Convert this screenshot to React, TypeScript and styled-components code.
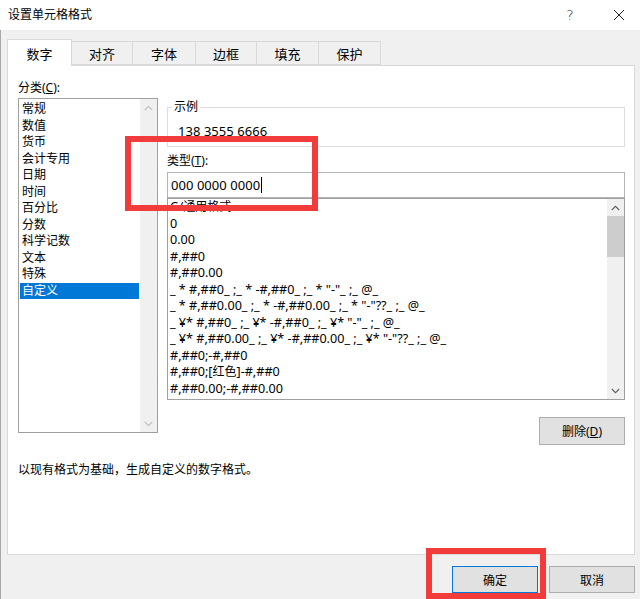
import React from 'react';
import styled, { createGlobalStyle } from 'styled-components';

const FONT = `"Noto Sans", "Noto Sans CJK SC", sans-serif`;

const Global = createGlobalStyle`
  html, body { margin: 0; padding: 0; background: #f0f0f0; }
  body {
    width: 640px; height: 599px; overflow: hidden;
    font-family: ${FONT}; font-size: 12px; color: #000;
    -webkit-font-smoothing: antialiased;
  }
  * { box-sizing: border-box; }
`;

const Window = styled.div`
  position: relative;
  width: 640px;
  height: 599px;
  display: flex;
  flex-direction: column;
  background: #f0f0f0;
  overflow: hidden;
`;

const TitleBar = styled.div`
  height: 30px;
  flex: none;
  background: #fff;
  display: flex;
  align-items: center;
  padding-left: 8px;
`;

const Title = styled.div`
  flex: 1;
  font-size: 12px;
  line-height: 16px;
`;

const CaptionButton = styled.div<{ $w: number }>`
  width: ${(p) => p.$w}px;
  height: 30px;
  display: flex;
  align-items: center;
  justify-content: center;
  color: #222;
  font-size: 14px;
  font-family: "DejaVu Sans", sans-serif;
  font-weight: 300;
`;

const Body = styled.div`
  flex: 1;
  display: flex;
  flex-direction: column;
  border-left: 1px solid #a8a8a8;
  padding: 9px 0 0 6px;
`;

const TabStrip = styled.div`
  display: flex;
  align-items: flex-end;
  height: 26px;
`;

const Tab = styled.div<{ $w: number; $active?: boolean }>`
  position: relative;
  width: ${(p) => p.$w}px;
  height: ${(p) => (p.$active ? 27 : 24)}px;
  margin-bottom: ${(p) => (p.$active ? -1 : 0)}px;
  margin-left: -1px;
  &:first-child { margin-left: 0; }
  z-index: ${(p) => (p.$active ? 2 : 1)};
  background: ${(p) => (p.$active ? '#fff' : '#f0f0f0')};
  border: 1px solid #d9d9d9;
  border-bottom: ${(p) => (p.$active ? 'none' : '1px solid #d9d9d9')};
  display: flex;
  align-items: center;
  justify-content: center;
  padding-top: ${(p) => (p.$active ? 0 : 1)}px;
  font-size: 13px;
`;

const Panel = styled.div`
  width: 628px;
  height: 490px;
  background: #fff;
  border: 1px solid #d9d9d9;
  padding: 13px 0 0 10px;
  display: flex;
  flex-direction: column;
`;

const TopRow = styled.div`
  display: flex;
  gap: 9px;
`;

const LeftCol = styled.div`
  width: 140px;
  display: flex;
  flex-direction: column;
`;

const Label = styled.div`
  line-height: 17px;
  height: 17px;
  margin-bottom: 2px;
`;

const Underline = styled.span`
  text-decoration: underline;
  text-underline-offset: 1px;
`;

const ListBox = styled.div<{ $h: number }>`
  height: ${(p) => p.$h}px;
  border: 1px solid #a0a0a0;
  display: flex;
  background: #fff;
  overflow: hidden;
`;

const Items = styled.div<{ $pt: number; $pl: number }>`
  flex: 1;
  padding: ${(p) => p.$pt}px ${(p) => p.$pl}px 0 ${(p) => p.$pl}px;
  overflow: hidden;
`;

const Row = styled.div<{ $selected?: boolean; $latin?: boolean }>`
  height: 16.5px;
  line-height: 16.5px;
  padding-left: ${(p) => (p.$latin ? 0 : 2)}px;
  white-space: nowrap;
  font-size: ${(p) => (p.$latin ? 12.6 : 12)}px;
  background: ${(p) => (p.$selected ? '#0078d7' : 'transparent')};
  color: ${(p) => (p.$selected ? '#fff' : '#000')};
`;

const Cjk = styled.span`
  font-size: 12px;
`;

const ScrollBar = styled.div`
  width: 17px;
  flex: none;
  background: #f0f0f0;
  display: flex;
  flex-direction: column;
`;

const ArrowBtn = styled.div`
  height: 17px;
  flex: none;
  display: flex;
  align-items: center;
  justify-content: center;
`;

const Track = styled.div`
  flex: 1;
`;

const Thumb = styled.div`
  height: 41px;
  background: #cdcdcd;
`;

const RightCol = styled.div`
  width: 458px;
  margin-top: 21px;
  display: flex;
  flex-direction: column;
`;

const GroupBox = styled.fieldset`
  margin: 0;
  height: 47px;
  border: 1px solid #dcdcdc;
  padding: 0 0 0 10px;
  min-width: 0;
`;

const Legend = styled.legend`
  padding: 0 2px;
  margin-left: -6px;
  line-height: 14px;
  font-size: 12px;
`;

const Sample = styled.div`
  margin-top: 9px;
  line-height: 16px;
  font-size: 13px;
  letter-spacing: 0.05px;
`;

const TypeLabel = styled.div`
  margin-top: 6px;
  line-height: 16px;
`;

const TextInput = styled.div`
  margin-top: 3px;
  height: 26px;
  border: 1px solid #b4b4b4;
  display: flex;
  align-items: center;
  padding-left: 3px;
  font-size: 13px;
  letter-spacing: 0.05px;
`;

const Caret = styled.span`
  display: inline-block;
  width: 1px;
  height: 16px;
  background: #000;
  margin-left: 1px;
`;

const ButtonBase = styled.div<{ $focused?: boolean }>`
  width: 86px;
  height: 28px;
  background: #e1e1e1;
  border: 1px solid ${(p) => (p.$focused ? '#0078d7' : '#adadad')};
  display: flex;
  align-items: center;
  justify-content: center;
  font-size: 12px;
`;

const DeleteButton = styled(ButtonBase)`
  align-self: flex-end;
  margin-top: 17px;
`;

const Description = styled.div`
  margin-top: 17px;
  line-height: 16px;
`;

const Footer = styled.div`
  display: flex;
  justify-content: flex-end;
  gap: 11px;
  padding: 11px 5px 0 0;
`;

const FooterButton = styled(ButtonBase)`
  height: 27px;
`;

const Annotation = styled.div<{ $x: number; $y: number; $w: number; $h: number }>`
  position: absolute;
  left: ${(p) => p.$x}px;
  top: ${(p) => p.$y}px;
  width: ${(p) => p.$w}px;
  height: ${(p) => p.$h}px;
  border: 6px solid #f23b3b;
  pointer-events: none;
  z-index: 10;
`;

const Chevron = ({ up, color }: { up?: boolean; color: string }) => (
  <svg width="9" height="6" viewBox="0 0 9 6">
    <polyline
      points={up ? '0.8,5 4.5,1.3 8.2,5' : '0.8,1 4.5,4.7 8.2,1'}
      fill="none"
      stroke={color}
      strokeWidth="1.1"
    />
  </svg>
);

const CloseIcon = () => (
  <svg width="12" height="12" viewBox="0 0 12 12">
    <path d="M1 1 L11 11 M11 1 L1 11" stroke="#222" strokeWidth="1" fill="none" />
  </svg>
);

const tabs: { label: string; w: number }[] = [
  { label: '数字', w: 65 },
  { label: '对齐', w: 62 },
  { label: '字体', w: 64 },
  { label: '边框', w: 62 },
  { label: '填充', w: 63 },
  { label: '保护', w: 63 },
];

const categories = [
  '常规', '数值', '货币', '会计专用', '日期', '时间',
  '百分比', '分数', '科学记数', '文本', '特殊', '自定义',
];

const formats: React.ReactNode[] = [
  <><Cjk>G/通用格式</Cjk></>,
  '0',
  '0.00',
  '#,##0',
  '#,##0.00',
  '_ * #,##0_ ;_ * -#,##0_ ;_ * "-"_ ;_ @_',
  '_ * #,##0.00_ ;_ * -#,##0.00_ ;_ * "-"??_ ;_ @_',
  '_ ¥* #,##0_ ;_ ¥* -#,##0_ ;_ ¥* "-"_ ;_ @_',
  '_ ¥* #,##0.00_ ;_ ¥* -#,##0.00_ ;_ ¥* "-"??_ ;_ @_',
  '#,##0;-#,##0',
  <>#,##0;[<Cjk>红色</Cjk>]-#,##0</>,
  '#,##0.00;-#,##0.00',
];

export default function App() {
  return (
    <>
      <Global />
      <Window>
        <TitleBar>
          <Title>设置单元格格式</Title>
          <CaptionButton $w={56}>?</CaptionButton>
          <CaptionButton $w={42}><CloseIcon /></CaptionButton>
        </TitleBar>
        <Body>
          <TabStrip>
            {tabs.map((t, i) => (
              <Tab key={t.label} $w={t.w} $active={i === 0}>{t.label}</Tab>
            ))}
          </TabStrip>
          <Panel>
            <TopRow>
              <LeftCol>
                <Label>分类(<Underline>C</Underline>):</Label>
                <ListBox $h={335}>
                  <Items $pt={2} $pl={1}>
                    {categories.map((c) => (
                      <Row key={c} $selected={c === '自定义'}>{c}</Row>
                    ))}
                  </Items>
                  <ScrollBar>
                    <ArrowBtn><Chevron up color="#c2c2c2" /></ArrowBtn>
                    <Track />
                    <ArrowBtn><Chevron color="#c2c2c2" /></ArrowBtn>
                  </ScrollBar>
                </ListBox>
              </LeftCol>
              <RightCol>
                <GroupBox>
                  <Legend>示例</Legend>
                  <Sample>138 3555 6666</Sample>
                </GroupBox>
                <TypeLabel>类型(<Underline>T</Underline>):</TypeLabel>
                <TextInput>000 0000 0000<Caret /></TextInput>
                <ListBox $h={202}>
                  <Items $pt={0} $pl={2}>
                    {formats.map((f, i) => (
                      <Row key={i} $latin>{f}</Row>
                    ))}
                  </Items>
                  <ScrollBar>
                    <ArrowBtn><Chevron up color="#606060" /></ArrowBtn>
                    <Track>
                      <Thumb />
                    </Track>
                    <ArrowBtn><Chevron color="#606060" /></ArrowBtn>
                  </ScrollBar>
                </ListBox>
                <DeleteButton>删除(<Underline>D</Underline>)</DeleteButton>
              </RightCol>
            </TopRow>
            <Description>以现有格式为基础，生成自定义的数字格式。</Description>
          </Panel>
          <Footer>
            <FooterButton $focused>确定</FooterButton>
            <FooterButton>取消</FooterButton>
          </Footer>
        </Body>
        <Annotation $x={125} $y={136} $w={193} $h={75} />
        <Annotation $x={426} $y={548} $w={120} $h={51} />
      </Window>
    </>
  );
}
